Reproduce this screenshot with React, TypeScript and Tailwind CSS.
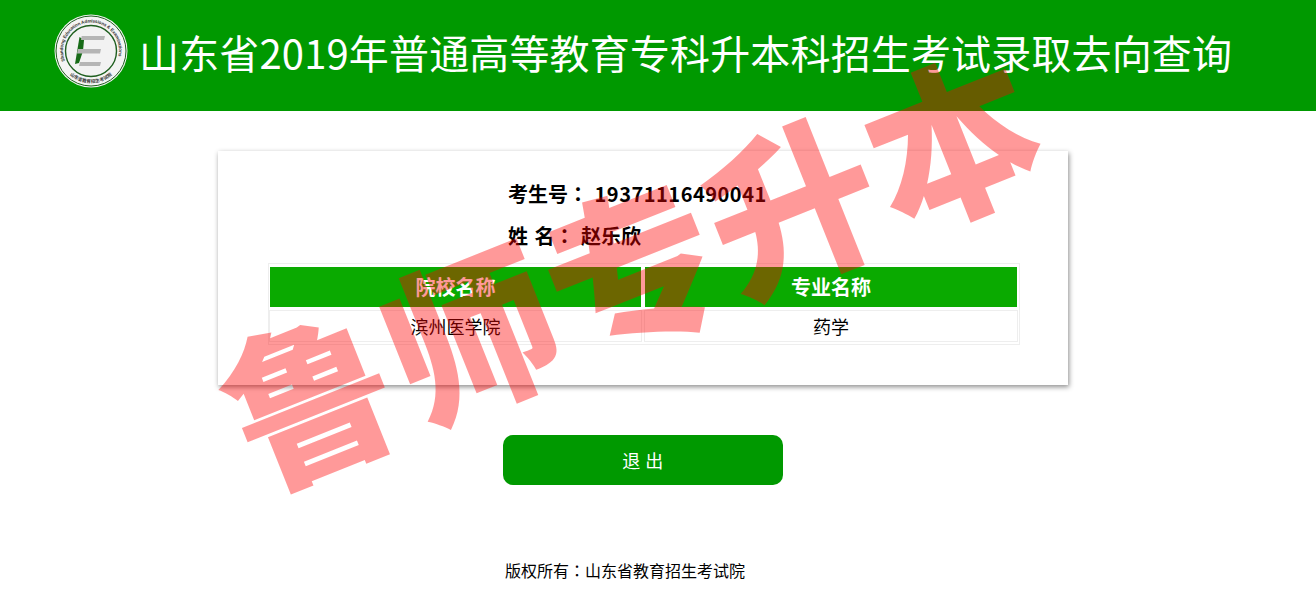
const cjk = "font-['Microsoft_YaHei','Noto_Sans_CJK_SC','Noto_Sans',sans-serif]"
const colonFont = "font-['Noto_Sans_CJK_TC',sans-serif]"

function Logo() {
  return (
    <svg viewBox="0 0 74 74" className="w-[74px] h-[74px] shrink-0">
      <defs>
        <path id="topArc" d="M 11 47 A 28 28 0 1 1 63 47" />
        <path id="bottomArc" d="M 11 55.6 A 32 32 0 0 0 63 55.6" />
      </defs>
      <circle cx="37" cy="37" r="36.5" fill="#f4f4f4" />
      <circle cx="37" cy="37" r="35" fill="none" stroke="#1f5f1f" strokeWidth="1" />
      <circle cx="37" cy="37" r="25.5" fill="#f2f2f2" stroke="#1f5f1f" strokeWidth="1.4" />
      <text fontSize="4.6" fontWeight="700" fill="#333" fontFamily="Liberation Sans, sans-serif">
        <textPath href="#topArc" textLength="104" lengthAdjust="spacing">Shandong Education Admissions &amp; Examinations</textPath>
      </text>
      <text fontSize="4.6" fontWeight="700" fill="#333" textAnchor="middle" fontFamily="Noto Sans CJK SC, sans-serif">
        <textPath href="#bottomArc" startOffset="50%">山东省教育招生考试院</textPath>
      </text>
      <polygon points="25.5,23 27,24 30,26 29,37 25,49 21,50" fill="#176b17" />
      <polygon points="27.7,22 51,22 50,26 27,26" fill="#b5b5b5" />
      <polygon points="24,35 47,35 46,39.5 23,39.5" fill="#b5b5b5" />
      <polygon points="26,48 47,48 46,52 25,52" fill="#b5b5b5" />
    </svg>
  )
}

export default function App() {
  return (
    <div className={`relative h-[607px] overflow-hidden bg-white text-black ${cjk}`}>
      <header className="h-[111px] bg-[#009900] flex items-start pl-[54px] pt-[14px] gap-[11px]">
        <Logo />
        <h1 className="mt-[18px] text-[40px] leading-none font-normal tracking-[0.15px] text-white whitespace-nowrap">
          山东省2019年普通高等教育专科升本科招生考试录取去向查询
        </h1>
      </header>

      <div className="pr-[30px] pt-[40px] flex flex-col items-center">
        <section className="w-[850px] h-[234px] bg-white shadow-[1px_2px_5px_rgba(0,0,0,0.45)] flex flex-col items-center">
          <div className="w-full pl-[290px] pt-[22px] text-[20px] leading-[42px] font-bold [word-spacing:2px]">
            <p>考生号<span className={colonFont}>：</span> <span className="tracking-[0.5px]">19371116490041</span></p>
            <p>姓 名<span className={colonFont}>：</span> 赵乐欣</p>
          </div>
          <div className="mt-[6px] ml-[2px] w-[752px] h-[82px] border border-[#eeeeee] pt-[2px] grid grid-cols-[373px_374px] grid-rows-[42px_32px] gap-x-[2px] gap-y-[2px]">
            <div className="border border-white bg-[#0aaa00] bg-clip-padding text-[20px] font-bold text-white flex items-center justify-center">院校名称</div>
            <div className="border border-white bg-[#0aaa00] bg-clip-padding text-[20px] font-bold text-white flex items-center justify-center">专业名称</div>
            <div className="border border-[#eeeeee] text-[18px] flex items-center justify-center">滨州医学院</div>
            <div className="border border-[#eeeeee] text-[18px] flex items-center justify-center">药学</div>
          </div>
        </section>

        <button className="mt-[50px] w-[280px] h-[50px] rounded-[10px] bg-[#009900] text-white text-[18px] tracking-[0.5px]">
          退 出
        </button>
      </div>

      <footer className="pt-[75px] pr-[66px] text-center text-[16px] leading-[20px]">
        版权所有<span className={colonFont}>：</span>山东省教育招生考试院
      </footer>

      {/* watermark sits over the whole page */}
      <div className="absolute left-[197px] top-[176px] w-[870px] h-[170px] -rotate-[21.8deg] pointer-events-none select-none text-[170px] leading-none font-black text-[#ff0000]/40 whitespace-nowrap tracking-[3px]">
        鲁师专升本
      </div>
    </div>
  )
}
